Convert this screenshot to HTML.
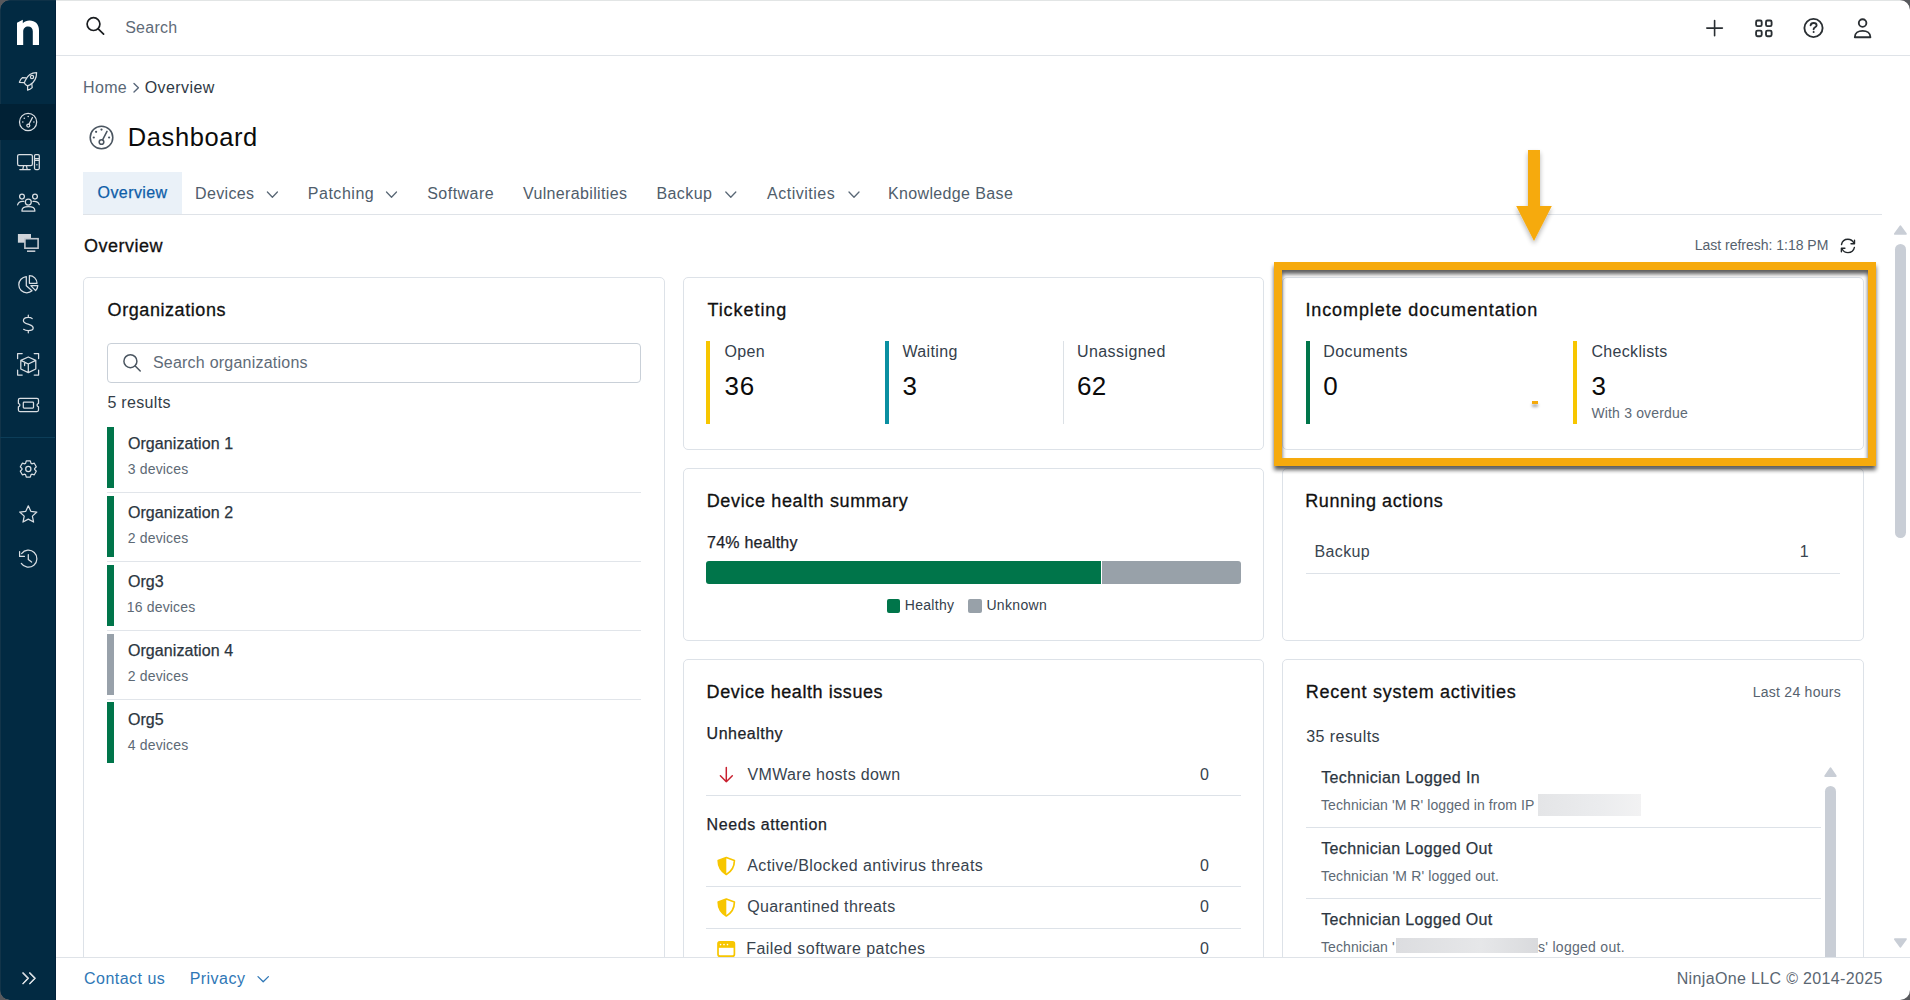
<!DOCTYPE html>
<html><head><meta charset="utf-8"><title>Dashboard</title>
<style>
html,body{margin:0;padding:0;width:1910px;height:1000px;overflow:hidden;background:#fff;font-family:"Liberation Sans", sans-serif;}
.t{position:absolute;line-height:1;white-space:nowrap;}
.r{position:absolute;}
svg{position:absolute;overflow:visible;}
</style></head><body>
<div class="r" style="left:0;top:0;width:1910px;height:1000px;background:#58595d"></div>
<div class="r" style="left:0;top:0;width:1910px;height:1000px;background:#fff;border-radius:9px;overflow:hidden"><div class="r" style="left:0;top:0;width:56px;height:1000px;background:#022a42"></div><div class="r" style="left:55px;top:0;width:1px;height:1000px;background:#01203a"></div><div class="r" style="left:0;top:0;width:56px;height:1px;background:#0e3147"></div><div class="r" style="left:0;top:0;width:1px;height:1000px;background:#123449"></div><div class="r" style="left:0;top:104px;width:55px;height:36px;background:#012135"></div><div class="r" style="left:0;top:437px;width:55px;height:1px;background:#0c3d58"></div><div class="r" style="left:56px;top:0;width:1854px;height:1px;background:#e2e5e5"></div></div>
<div class="r" style="left:56px;top:55px;width:1854px;height:1px;background:#dfe3e8;"></div>
<div class="t" style="left:125.20px;top:20.46px;font-size:16px;color:#5f6b78;letter-spacing:0.241px;">Search</div>
<div class="t" style="left:83.00px;top:80.46px;font-size:16px;color:#5a6876;letter-spacing:0.34px;">Home</div>
<div class="t" style="left:144.70px;top:80.46px;font-size:16px;color:#2f3a45;letter-spacing:0.411px;">Overview</div>
<div class="t" style="left:127.80px;top:125.01px;font-size:25.5px;color:#0b0b0b;letter-spacing:0.592px;">Dashboard</div>
<div class="r" style="left:83px;top:172px;width:99px;height:42px;background:#eaf1f8;"></div>
<div class="r" style="left:83px;top:214px;width:1799px;height:1px;background:#dfe3e8;"></div>
<div class="t" style="left:97.60px;top:185.46px;font-size:16px;color:#0f5ea8;letter-spacing:0.411px;-webkit-text-stroke:0.25px #0f5ea8;">Overview</div>
<div class="t" style="left:195.00px;top:186.46px;font-size:16px;color:#4f5d6b;letter-spacing:0.349px;">Devices</div>
<div class="t" style="left:307.80px;top:186.46px;font-size:16px;color:#4f5d6b;letter-spacing:0.519px;">Patching</div>
<div class="t" style="left:427.20px;top:186.46px;font-size:16px;color:#4f5d6b;letter-spacing:0.48px;">Software</div>
<div class="t" style="left:523.00px;top:186.46px;font-size:16px;color:#4f5d6b;letter-spacing:0.356px;">Vulnerabilities</div>
<div class="t" style="left:656.40px;top:186.46px;font-size:16px;color:#4f5d6b;letter-spacing:0.426px;">Backup</div>
<div class="t" style="left:767.00px;top:186.46px;font-size:16px;color:#4f5d6b;letter-spacing:0.508px;">Activities</div>
<div class="t" style="left:887.90px;top:186.46px;font-size:16px;color:#4f5d6b;letter-spacing:0.37px;">Knowledge Base</div>
<div class="t" style="left:84.00px;top:236.66px;font-size:18px;color:#111111;letter-spacing:0.512px;-webkit-text-stroke:0.3px #111111;">Overview</div>
<div class="t" style="left:1694.70px;top:238.15px;font-size:14px;color:#56626e;letter-spacing:-0.009px;">Last refresh: 1:18 PM</div>
<div class="r" style="left:1895px;top:244px;width:11px;height:294px;background:#c9ced6;border-radius:5.5px"></div>
<svg style="left:0;top:0" width="1910" height="1000"><path d="M1900.4 226.3 L1905.9 233.9 L1894.9 233.9 Z" fill="#c9ced6" stroke="#c9ced6" stroke-width="1.8" stroke-linejoin="round"/><path d="M1900.4 946.7 L1905.9 939.1 L1894.9 939.1 Z" fill="#c9ced6" stroke="#c9ced6" stroke-width="1.8" stroke-linejoin="round"/></svg>
<div class="r" style="left:83px;top:277px;width:580px;height:718px;border:1px solid #dde2e8;border-radius:5px;background:#fff"></div>
<div class="r" style="left:683px;top:277px;width:579px;height:171px;border:1px solid #dde2e8;border-radius:5px;background:#fff"></div>
<div class="r" style="left:1282px;top:277px;width:580px;height:171px;border:1px solid #dde2e8;border-radius:5px;background:#fff"></div>
<div class="r" style="left:683px;top:468px;width:579px;height:171px;border:1px solid #dde2e8;border-radius:5px;background:#fff"></div>
<div class="r" style="left:1282px;top:468px;width:580px;height:171px;border:1px solid #dde2e8;border-radius:5px;background:#fff"></div>
<div class="r" style="left:683px;top:659px;width:579px;height:338px;border:1px solid #dde2e8;border-radius:5px;background:#fff"></div>
<div class="r" style="left:1282px;top:659px;width:580px;height:338px;border:1px solid #dde2e8;border-radius:5px;background:#fff"></div>
<div class="t" style="left:107.60px;top:301.06px;font-size:18px;color:#111111;letter-spacing:0.57px;-webkit-text-stroke:0.3px #111111;">Organizations</div>
<div class="r" style="left:107px;top:343px;width:532px;height:38px;border:1px solid #c9d0d8;border-radius:4px"></div>
<div class="t" style="left:152.90px;top:355.46px;font-size:16px;color:#5f6b78;letter-spacing:0.231px;">Search organizations</div>
<div class="t" style="left:107.40px;top:395.46px;font-size:16px;color:#333d47;letter-spacing:0.316px;">5 results</div>
<div class="r" style="left:107px;top:427.0px;width:7px;height:61px;background:#00754a;"></div>
<div class="r" style="left:107px;top:492.3px;width:534px;height:1px;background:#e1e5ea;"></div>
<div class="t" style="left:127.90px;top:436.46px;font-size:16px;color:#2b3540;letter-spacing:0.095px;-webkit-text-stroke:0.25px #2b3540;">Organization 1</div>
<div class="t" style="left:127.75px;top:462.15px;font-size:14px;color:#5d6975;letter-spacing:0.169px;">3 devices</div>
<div class="r" style="left:107px;top:495.85px;width:7px;height:61px;background:#00754a;"></div>
<div class="r" style="left:107px;top:561.15px;width:534px;height:1px;background:#e1e5ea;"></div>
<div class="t" style="left:127.90px;top:505.31px;font-size:16px;color:#2b3540;letter-spacing:0.095px;-webkit-text-stroke:0.25px #2b3540;">Organization 2</div>
<div class="t" style="left:127.75px;top:531.00px;font-size:14px;color:#5d6975;letter-spacing:0.169px;">2 devices</div>
<div class="r" style="left:107px;top:564.7px;width:7px;height:61px;background:#00754a;"></div>
<div class="r" style="left:107px;top:630.0px;width:534px;height:1px;background:#e1e5ea;"></div>
<div class="t" style="left:127.90px;top:574.16px;font-size:16px;color:#2b3540;letter-spacing:0.095px;-webkit-text-stroke:0.25px #2b3540;">Org3</div>
<div class="t" style="left:126.75px;top:599.85px;font-size:14px;color:#5d6975;letter-spacing:0.169px;">16 devices</div>
<div class="r" style="left:107px;top:633.55px;width:7px;height:61px;background:#98a1aa;"></div>
<div class="r" style="left:107px;top:698.85px;width:534px;height:1px;background:#e1e5ea;"></div>
<div class="t" style="left:127.90px;top:643.01px;font-size:16px;color:#2b3540;letter-spacing:0.095px;-webkit-text-stroke:0.25px #2b3540;">Organization 4</div>
<div class="t" style="left:127.75px;top:668.70px;font-size:14px;color:#5d6975;letter-spacing:0.169px;">2 devices</div>
<div class="r" style="left:107px;top:702.4px;width:7px;height:61px;background:#00754a;"></div>
<div class="t" style="left:127.90px;top:711.86px;font-size:16px;color:#2b3540;letter-spacing:0.095px;-webkit-text-stroke:0.25px #2b3540;">Org5</div>
<div class="t" style="left:127.75px;top:737.55px;font-size:14px;color:#5d6975;letter-spacing:0.169px;">4 devices</div>
<div class="t" style="left:707.40px;top:301.06px;font-size:18px;color:#111111;letter-spacing:0.944px;-webkit-text-stroke:0.3px #111111;">Ticketing</div>
<div class="r" style="left:706px;top:341px;width:4px;height:83px;background:#f7c600;"></div>
<div class="r" style="left:885px;top:341px;width:4px;height:83px;background:#0a8fa1;"></div>
<div class="r" style="left:1063px;top:341px;width:1px;height:83px;background:#dce1e6;"></div>
<div class="t" style="left:724.40px;top:344.46px;font-size:16px;color:#34404b;letter-spacing:0.353px;">Open</div>
<div class="t" style="left:902.50px;top:344.46px;font-size:16px;color:#34404b;letter-spacing:0.357px;">Waiting</div>
<div class="t" style="left:1077.00px;top:344.46px;font-size:16px;color:#34404b;letter-spacing:0.422px;">Unassigned</div>
<div class="t" style="left:724.40px;top:373.49px;font-size:26px;color:#0b0b0b;letter-spacing:0.8px;">36</div>
<div class="t" style="left:902.50px;top:373.49px;font-size:26px;color:#0b0b0b;">3</div>
<div class="t" style="left:1077.00px;top:373.49px;font-size:26px;color:#0b0b0b;letter-spacing:0.2px;">62</div>
<div class="t" style="left:1305.40px;top:301.06px;font-size:18px;color:#111111;letter-spacing:0.903px;-webkit-text-stroke:0.3px #111111;">Incomplete documentation</div>
<div class="r" style="left:1306px;top:341px;width:4px;height:83px;background:#00754a;"></div>
<div class="r" style="left:1573px;top:341px;width:4px;height:83px;background:#f7c600;"></div>
<div class="t" style="left:1323.20px;top:344.46px;font-size:16px;color:#34404b;letter-spacing:0.422px;">Documents</div>
<div class="t" style="left:1323.20px;top:373.49px;font-size:26px;color:#0b0b0b;">0</div>
<div class="t" style="left:1591.40px;top:344.46px;font-size:16px;color:#34404b;letter-spacing:0.333px;">Checklists</div>
<div class="t" style="left:1591.40px;top:373.49px;font-size:26px;color:#0b0b0b;">3</div>
<div class="t" style="left:1591.40px;top:406.15px;font-size:14px;color:#5d6975;letter-spacing:0.171px;">With 3 overdue</div>
<div class="t" style="left:706.70px;top:492.06px;font-size:18px;color:#111111;letter-spacing:0.652px;-webkit-text-stroke:0.3px #111111;">Device health summary</div>
<div class="t" style="left:707.00px;top:535.46px;font-size:16px;color:#1c2329;letter-spacing:0.244px;-webkit-text-stroke:0.25px #1c2329;">74% healthy</div>
<div class="r" style="left:706px;top:561px;width:395px;height:23px;background:#00754a;border-radius:3px 0 0 3px"></div>
<div class="r" style="left:1102px;top:561px;width:139px;height:23px;background:#98a1a9;border-radius:0 3px 3px 0"></div>
<div class="r" style="left:887px;top:599px;width:13px;height:14px;background:#00754a;border-radius:2px"></div>
<div class="r" style="left:968px;top:599px;width:14px;height:14px;background:#98a1a9;border-radius:2px"></div>
<div class="t" style="left:904.80px;top:598.15px;font-size:14px;color:#34404b;letter-spacing:0.289px;">Healthy</div>
<div class="t" style="left:986.40px;top:598.15px;font-size:14px;color:#34404b;letter-spacing:0.337px;">Unknown</div>
<div class="t" style="left:1305.20px;top:492.06px;font-size:18px;color:#111111;letter-spacing:0.608px;-webkit-text-stroke:0.3px #111111;">Running actions</div>
<div class="t" style="left:1314.50px;top:544.46px;font-size:16px;color:#3a4550;letter-spacing:0.366px;">Backup</div>
<div class="t" style="right:101.30px;top:544.46px;font-size:16px;color:#3a4550;">1</div>
<div class="r" style="left:1306px;top:573px;width:534px;height:1px;background:#dde2e8;"></div>
<div class="t" style="left:706.60px;top:683.06px;font-size:18px;color:#111111;letter-spacing:0.574px;-webkit-text-stroke:0.3px #111111;">Device health issues</div>
<div class="t" style="left:706.60px;top:726.16px;font-size:16px;color:#1c2329;letter-spacing:0.494px;-webkit-text-stroke:0.25px #1c2329;">Unhealthy</div>
<div class="t" style="left:747.50px;top:767.46px;font-size:16px;color:#38434e;letter-spacing:0.349px;">VMWare hosts down</div>
<div class="t" style="right:701.10px;top:767.46px;font-size:16px;color:#38434e;">0</div>
<div class="r" style="left:706px;top:795px;width:535px;height:1px;background:#dde2e8;"></div>
<div class="t" style="left:706.60px;top:817.46px;font-size:16px;color:#1c2329;letter-spacing:0.587px;-webkit-text-stroke:0.25px #1c2329;">Needs attention</div>
<div class="t" style="left:747.20px;top:857.96px;font-size:16px;color:#38434e;letter-spacing:0.428px;">Active/Blocked antivirus threats</div>
<div class="t" style="right:701.10px;top:857.96px;font-size:16px;color:#38434e;">0</div>
<div class="r" style="left:706px;top:886px;width:535px;height:1px;background:#dde2e8;"></div>
<div class="t" style="left:747.20px;top:899.46px;font-size:16px;color:#38434e;letter-spacing:0.365px;">Quarantined threats</div>
<div class="t" style="right:701.10px;top:899.46px;font-size:16px;color:#38434e;">0</div>
<div class="r" style="left:706px;top:928px;width:535px;height:1px;background:#dde2e8;"></div>
<div class="t" style="left:746.20px;top:941.46px;font-size:16px;color:#38434e;letter-spacing:0.447px;">Failed software patches</div>
<div class="t" style="right:701.10px;top:941.46px;font-size:16px;color:#38434e;">0</div>
<div class="t" style="left:1305.80px;top:683.06px;font-size:18px;color:#111111;letter-spacing:0.732px;-webkit-text-stroke:0.3px #111111;">Recent system activities</div>
<div class="t" style="right:69.04px;top:685.15px;font-size:14px;color:#56626e;letter-spacing:0.264px;">Last 24 hours</div>
<div class="t" style="left:1306.20px;top:729.06px;font-size:16px;color:#333d47;letter-spacing:0.448px;">35 results</div>
<div class="t" style="left:1321.20px;top:770.46px;font-size:16px;color:#2b3540;letter-spacing:0.383px;-webkit-text-stroke:0.25px #2b3540;">Technician Logged In</div>
<div class="t" style="left:1321.20px;top:841.46px;font-size:16px;color:#2b3540;letter-spacing:0.369px;-webkit-text-stroke:0.25px #2b3540;">Technician Logged Out</div>
<div class="t" style="left:1321.20px;top:912.46px;font-size:16px;color:#2b3540;letter-spacing:0.369px;-webkit-text-stroke:0.25px #2b3540;">Technician Logged Out</div>
<div class="t" style="left:1321.00px;top:798.15px;font-size:14px;color:#5d6975;letter-spacing:0.078px;">Technician 'M R' logged in from IP</div>
<div class="t" style="left:1321.00px;top:869.15px;font-size:14px;color:#5d6975;letter-spacing:0.136px;">Technician 'M R' logged out.</div>
<div class="t" style="left:1321.00px;top:940.15px;font-size:14px;color:#5d6975;letter-spacing:0.078px;">Technician '</div>
<div class="r" style="left:1306px;top:827px;width:515px;height:1px;background:#dde2e8;"></div>
<div class="r" style="left:1306px;top:898px;width:515px;height:1px;background:#dde2e8;"></div>
<div class="r" style="left:1538px;top:794px;width:103px;height:22px;background:linear-gradient(90deg,#e4e5e7,#ebecee 60%,#f2f2f3);"></div>
<div class="r" style="left:1396px;top:938px;width:142px;height:15px;background:linear-gradient(90deg,#dcdde0,#e6e7e9 60%,#d9dadd);"></div>
<div class="t" style="left:1538.00px;top:940.15px;font-size:14px;color:#5d6975;letter-spacing:0.288px;">s' logged out.</div>
<div class="r" style="left:1825px;top:786px;width:11px;height:200px;background:#c9ced6;border-radius:5.5px"></div>
<svg style="left:0;top:0" width="1910" height="1000"><path d="M1830.5 768.3 L1835.8 776 L1825.2 776 Z" fill="#c9ced6" stroke="#c9ced6" stroke-width="1.8" stroke-linejoin="round"/></svg>
<div class="r" style="left:1532px;top:401px;width:6px;height:3px;background:#f5a90a;box-shadow:0 3px 3px rgba(0,0,0,0.35)"></div>
<svg style="left:0;top:0" width="1910" height="1000"><path d="M17 22.8 L22.8 19.8 L22.8 23.3 C24.6 21.4 26.9 20.6 29.5 20.6 C35.2 20.6 39 24.3 39 30.3 L39 45 L32.8 45 L32.8 31.2 C32.8 28.3 30.9 26.6 28.1 26.6 C25.2 26.6 23.2 28.6 23.2 31.6 L23.2 45 L17 45 Z" fill="#ffffff"/><g fill="none" stroke="#d9dee3" stroke-width="1.25" stroke-linecap="round" stroke-linejoin="round"><path d="M36.6 72.6 C31.8 72.6 27.6 75.2 25.4 80.2 L24.3 82.7 C24.9 84.2 26 85.3 27.6 85.9 L30.3 84.6 C34.4 82.2 36.6 78.2 36.6 72.6 Z"/><path d="M26.2 77.8 L22.6 77.6 C21.2 78.6 20 80.3 19.4 82.3 L24.3 82.7"/><path d="M31.8 83.7 L32.2 87.6 C31 88.7 29.4 89.7 27.6 90.1 L27.6 85.9"/><circle cx="32" cy="77" r="1.6"/><circle cx="28.1" cy="122" r="8.6"/><circle cx="28.3" cy="125.6" r="1.5"/><path d="M29 124.2 L32.4 117.6"/></g><g fill="#d9dee3"><circle cx="28.2" cy="116.5" r="0.8"/><circle cx="24.3" cy="118.2" r="0.8"/><circle cx="22.8" cy="122" r="0.8"/><circle cx="33.9" cy="122" r="0.8"/></g><g fill="none" stroke="#d9dee3" stroke-width="1.25" stroke-linecap="round" stroke-linejoin="round"><rect x="17.6" y="154.5" width="14.8" height="11" rx="1.6"/><path d="M23.6 165.6 L22.8 169.3 M26.4 165.6 L27.2 169.3 M19.8 169.5 L30.2 169.5"/><rect x="34.5" y="154.5" width="4.8" height="15" rx="1.2"/><path d="M35.2 158.6 L38.6 158.6 M35.2 160.4 L38.6 160.4"/></g><circle cx="36.9" cy="164.8" r="0.7" fill="#d9dee3"/><g fill="none" stroke="#d9dee3" stroke-width="1.25" stroke-linecap="round" stroke-linejoin="round"><circle cx="22" cy="196.6" r="2.4"/><circle cx="35" cy="196.6" r="2.4"/><circle cx="28.3" cy="202" r="3"/><path d="M22 211.2 L22 210.2 C22 207.8 24 206.6 28.4 206.6 C32.8 206.6 34.8 207.8 34.8 210.2 L34.8 211.2 Z"/><path d="M17.6 204.8 C18.2 202.6 19.8 201.4 22.6 201.4 L23.8 201.4 M33 201.4 L34.4 201.4 C37.2 201.4 38.6 202.6 39.2 204.6"/></g><rect x="17.9" y="234" width="13.1" height="8.7" fill="#cfd4da"/><rect x="24.9" y="238.7" width="13.2" height="9.5" fill="#022a42" stroke="#c2c8cf" stroke-width="1.6"/><rect x="27" y="250.4" width="8.3" height="1.6" fill="#c2c8cf"/><g fill="none" stroke="#d9dee3" stroke-width="1.25" stroke-linecap="round" stroke-linejoin="round"><path d="M26.3 276.6 C22 277 18.8 280.6 18.8 284.8 C18.8 289.4 22.5 292.8 26.8 292.8 C28.8 292.8 30.6 292.1 32 290.8 L26.3 285.8 Z"/><path d="M29.4 275.6 L29.4 283.3 L37 283.3 C37 279 33.6 275.6 29.4 275.6 Z"/><path d="M30.8 285.6 L37.8 285.6 C37.6 287.6 36.8 289.4 35.6 290.6 Z"/><path d="M28.3 315.2 L28.3 317.2 M32.2 318.6 C31.4 317.8 30 317.4 28.3 317.4 C25.6 317.4 23.4 318.6 23.4 320.8 C23.4 323.4 26.8 323.8 29.4 324.6 C31.6 325.4 33.2 326.2 33.2 328 C33.2 329.8 31.2 330.6 28.3 330.6 C26.4 330.6 24.8 330.2 23.6 329.3 M28.3 330.6 L28.3 332.8"/><path d="M17.6 358.6 L17.6 353.6 L22.2 353.6 M34.2 353.6 L38.6 353.6 L38.6 358.6 M17.6 370 L17.6 375 L22.2 375 M34.2 375 L38.6 375 L38.6 370"/><path d="M28.3 357 L35.8 360.4 L35.8 369 L28.3 372.6 L20.8 369 L20.8 360.4 Z M20.8 360.4 L28.3 364 L35.8 360.4 M28.3 364 L28.3 372.6 M24.6 362.2 L24.6 365.6"/><path d="M20 398.4 L37 398.4 C37.8 398.4 38.5 399.1 38.5 399.9 L38.5 403.3 C37.6 403.6 37 404.3 37 405.1 C37 405.9 37.6 406.6 38.5 406.9 L38.5 410.1 C38.5 410.9 37.8 411.6 37 411.6 L20 411.6 C19.2 411.6 18.4 410.9 18.4 410.1 L18.4 406.9 C19.3 406.6 19.9 405.9 19.9 405.1 C19.9 404.3 19.3 403.6 18.4 403.3 L18.4 399.9 C18.4 399.1 19.2 398.4 20 398.4 Z"/><rect x="23.3" y="402.2" width="10.2" height="5.8" rx="0.8"/><path d="M25.54 463.34 L26.29 460.95 L30.31 460.95 L31.06 463.34 L31.82 463.78 L34.27 463.23 L36.28 466.71 L34.58 468.56 L34.58 469.44 L36.28 471.29 L34.27 474.77 L31.82 474.22 L31.06 474.66 L30.31 477.05 L26.29 477.05 L25.54 474.66 L24.78 474.22 L22.33 474.77 L20.32 471.29 L22.02 469.44 L22.02 468.56 L20.32 466.71 L22.33 463.23 L24.78 463.78 Z"/><circle cx="28.3" cy="469" r="2.6"/><polygon points="28.30,505.80 30.83,511.32 36.86,512.02 32.39,516.13 33.59,522.08 28.30,519.10 23.01,522.08 24.21,516.13 19.74,512.02 25.77,511.32"/><path d="M21.3 563.4 A8.5 8.5 0 1 0 21.6 553.6 M19.6 551.6 L19.6 556.4 L24.4 556.4 M28.3 554.6 L28.3 559.4 L31.6 562"/><path d="M23 973 L28.2 978.3 L23 983.6 M29.8 973 L35 978.3 L29.8 983.6"/></g><g fill="none" stroke="#1a1d20" stroke-width="1.7" stroke-linecap="round" stroke-linejoin="round"><circle cx="93.5" cy="24.1" r="6.4"/><path d="M98.2 28.8 L103.6 34.2"/></g><g fill="none" stroke="#2a2f33" stroke-width="1.6" stroke-linecap="round" stroke-linejoin="round"><path d="M1714.6 20.5 L1714.6 35.8 M1706.8 28.1 L1722.4 28.1"/></g><g fill="none" stroke="#2a2f33" stroke-width="1.85" stroke-linecap="round" stroke-linejoin="round"><rect x="1756.1" y="20.5" width="5.6" height="5.6" rx="1.4"/><rect x="1766" y="20.5" width="5.6" height="5.6" rx="1.4"/><rect x="1756.1" y="30.6" width="5.6" height="5.6" rx="1.4"/><rect x="1766" y="30.6" width="5.6" height="5.6" rx="1.4"/><circle cx="1813.5" cy="28" r="9.1"/><path d="M1810.6 25.4 C1810.8 23.8 1812 23 1813.6 23 C1815.4 23 1816.6 24 1816.6 25.4 C1816.6 27.2 1813.6 27.4 1813.6 29.2"/><circle cx="1862.6" cy="23" r="3.8"/><path d="M1854.8 37.2 C1854.8 33 1858.2 30.8 1862.6 30.8 C1867 30.8 1870.4 33 1870.4 37.2 Z"/></g><circle cx="1813.6" cy="32" r="1" fill="#2a2f33"/><path d="M134 83.5 L138.4 87.8 L134 92" fill="none" stroke="#59677a" stroke-width="1.4" stroke-linecap="round" stroke-linejoin="round"/><g fill="none" stroke="#4a5560" stroke-width="1.55" stroke-linecap="round"><circle cx="101.5" cy="137.5" r="11.3"/><circle cx="101.5" cy="142" r="2.3"/><path d="M102.6 139.8 L107 131.4"/></g><g fill="#4a5560"><circle cx="101.5" cy="129.6" r="1.1"/><circle cx="96.1" cy="131.8" r="1.1"/><circle cx="93.8" cy="137.5" r="1.1"/><circle cx="109.1" cy="137.5" r="1.1"/></g><path d="M267.40000000000003 192 L272.40000000000003 197.2 L277.40000000000003 192" fill="none" stroke="#5a6876" stroke-width="1.3" stroke-linecap="round" stroke-linejoin="round"/><path d="M386.5 192 L391.5 197.2 L396.5 192" fill="none" stroke="#5a6876" stroke-width="1.3" stroke-linecap="round" stroke-linejoin="round"/><path d="M725.8000000000001 192 L730.8000000000001 197.2 L735.8000000000001 192" fill="none" stroke="#5a6876" stroke-width="1.3" stroke-linecap="round" stroke-linejoin="round"/><path d="M849.0 192 L854.0 197.2 L859.0 192" fill="none" stroke="#5a6876" stroke-width="1.3" stroke-linecap="round" stroke-linejoin="round"/><g fill="none" stroke="#22272b" stroke-width="1.4" stroke-linecap="round" stroke-linejoin="round"><path d="M1841.5 244.5 C1842.2 241.2 1844.8 239.3 1847.9 239.3 C1850.6 239.3 1852.8 240.8 1854 243.2"/><path d="M1854.5 240.2 L1854.5 243.7 L1851 243.7"/><path d="M1854.4 247.4 C1853.7 250.7 1851.1 252.6 1848 252.6 C1845.3 252.6 1843.1 251.1 1841.9 248.7"/><path d="M1841.4 251.7 L1841.4 248.2 L1844.9 248.2"/></g><g fill="none" stroke="#4a5560" stroke-width="1.5" stroke-linecap="round"><circle cx="130.4" cy="361.2" r="6.5"/><path d="M135.2 366 L140.2 371"/></g><g fill="none" stroke="#c8202f" stroke-width="1.5" stroke-linecap="round" stroke-linejoin="round"><path d="M726.3 767.6 L726.3 781.8 M720.4 775.8 L726.3 781.8 L732.3 775.8"/></g><path d="M726.3 857.5 L734.4 860.5 C734.4 866.5 731.4 871.5 726.3 874.5 C721.2 871.5 718.2 866.5 718.2 860.5 Z" fill="none" stroke="#f7c600" stroke-width="1.7" stroke-linejoin="round"/><path d="M726.3 857.5 L718.2 860.5 C718.2 866.5 721.2 871.5 726.3 874.5 Z" fill="#f7c600"/><path d="M726.3 899 L734.4 902 C734.4 908 731.4 913 726.3 916 C721.2 913 718.2 908 718.2 902 Z" fill="none" stroke="#f7c600" stroke-width="1.7" stroke-linejoin="round"/><path d="M726.3 899 L718.2 902 C718.2 908 721.2 913 726.3 916 Z" fill="#f7c600"/><rect x="718" y="941.8" width="16.4" height="14.4" rx="2" fill="none" stroke="#f7c600" stroke-width="1.7"/><rect x="718" y="941.8" width="16.4" height="6" fill="#f7c600"/><g fill="#fff"><circle cx="720.6" cy="944.6" r="0.8"/><circle cx="724" cy="944.6" r="0.8"/><circle cx="727.5" cy="944.6" r="0.8"/></g></svg>
<svg style="left:0;top:0" width="1910" height="1000"><defs><filter id="sh" x="-20%" y="-20%" width="140%" height="140%"><feGaussianBlur in="SourceAlpha" stdDeviation="2.2"/><feOffset dx="0" dy="3.5" result="b"/><feComponentTransfer><feFuncA type="linear" slope="0.65"/></feComponentTransfer><feMerge><feMergeNode/><feMergeNode in="SourceGraphic"/></feMerge></filter><filter id="sh2" x="-50%" y="-20%" width="200%" height="140%"><feGaussianBlur in="SourceAlpha" stdDeviation="2.5"/><feOffset dx="0" dy="2.5" result="b"/><feComponentTransfer><feFuncA type="linear" slope="0.3"/></feComponentTransfer><feMerge><feMergeNode/><feMergeNode in="SourceGraphic"/></feMerge></filter></defs><g filter="url(#sh)"><path fill-rule="evenodd" fill="#f6aa0b" d="M1274 262 L1876 262 L1876 466 L1274 466 Z M1282 270 L1282 458 L1868 458 L1868 270 Z"/></g><g filter="url(#sh2)"><path fill="#f6aa0b" d="M1528 150 L1540 150 L1540 206 L1551.8 206 L1534 241 L1516.2 206 L1528 206 Z"/></g></svg>
<div class="r" style="left:56px;top:957px;width:1854px;height:43px;background:#fff;"></div>
<div class="r" style="left:56px;top:957px;width:1854px;height:1px;background:#dfe3e8;"></div>
<div class="t" style="left:84.00px;top:971.46px;font-size:16px;color:#2f77b6;letter-spacing:0.48px;">Contact us</div>
<div class="t" style="left:189.70px;top:971.46px;font-size:16px;color:#2f77b6;letter-spacing:0.458px;">Privacy</div>
<div class="t" style="left:1676.70px;top:971.46px;font-size:16px;color:#5a6672;letter-spacing:0.348px;">NinjaOne LLC © 2014-2025</div>
<svg style="left:0;top:0" width="1910" height="1000"><path d="M258 976.6 L263.2 981.8 L268.4 976.6" fill="none" stroke="#2f77b6" stroke-width="1.3" stroke-linecap="round" stroke-linejoin="round"/><path d="M23 973 L28.2 978.3 L23 983.6 M29.8 973 L35 978.3 L29.8 983.6" fill="none" stroke="#d9dee3" stroke-width="1.25" stroke-linecap="round" stroke-linejoin="round"/></svg>
<svg style="left:0;top:0" width="1910" height="1000"><path d="M0 0 L10 0 A10 10 0 0 0 0 10 Z" fill="#58595d"/><path d="M1910 0 L1900 0 A10 10 0 0 1 1910 10 Z" fill="#58595d"/><path d="M0 1000 L0 990 A10 10 0 0 0 10 1000 Z" fill="#58595d"/><path d="M1910 1000 L1900 1000 A10 10 0 0 0 1910 990 Z" fill="#58595d"/></svg>
</body></html>
